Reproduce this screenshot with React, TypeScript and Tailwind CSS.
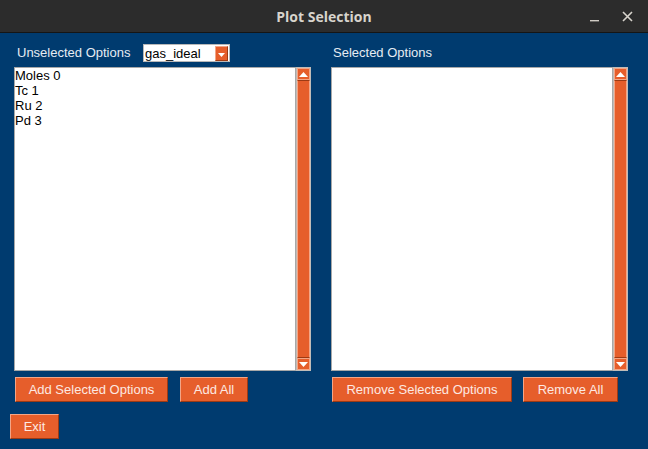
import React from "react";

const font = { fontFamily: '"Liberation Sans", Arial, sans-serif' };

function Btn({ label, w }: { label: string; w: string }) {
  return (
    <div
      className={`${w} h-[25px] flex items-center justify-center bg-[#e65e2b] border border-t-[#f3a586] border-l-[#f3a586] border-b-[#9c3a14] border-r-[#9c3a14] text-[#fde9e2] text-[13px] leading-none`}
    >
      {label}
    </div>
  );
}

function ScrollBar() {
  return (
    <div className="w-[15px] h-full flex flex-col bg-[#e65e2b] border border-[#c0bcb8] box-border">
      <div className="h-[12px] flex items-center justify-center bg-[#e65e2b] border border-[#f3a586]">
        <svg width="9" height="5" viewBox="0 0 9 5">
          <polygon points="4.5,0 9,5 0,5" fill="#ffffff" />
        </svg>
      </div>
      <div className="flex-1 border-x border-[#f3a586] border-y border-y-[#9c3a14]" />
      <div className="h-[12px] flex items-center justify-center bg-[#e65e2b] border border-[#f3a586]">
        <svg width="9" height="5" viewBox="0 0 9 5">
          <polygon points="0,0 9,0 4.5,5" fill="#ffffff" />
        </svg>
      </div>
    </div>
  );
}

function ListBox({ items }: { items: string[] }) {
  return (
    <div className="flex h-[304px] w-[297px]">
      <div className="flex-1 bg-white border border-[#a8a8a8] text-black text-[13px] leading-[15px]">
        {items.map((t) => (
          <div key={t}>{t}</div>
        ))}
      </div>
      <ScrollBar />
    </div>
  );
}

export default function App() {
  return (
    <div className="w-[648px] h-[449px] flex flex-col bg-[#003b6f] overflow-hidden" style={font}>
      <div className="h-[33px] shrink-0 bg-[#2c2c2c] border-b border-[#151515] relative flex items-center justify-center">
        <span
          className="text-[#d8d4cd] text-[14px] font-bold"
          style={{ fontFamily: '"Open Sans", "DejaVu Sans", sans-serif' }}
        >
          Plot Selection
        </span>
        <div className="absolute right-[15px] top-0 h-full flex items-center gap-[22px] text-[#d8d4cd]">
          <svg width="10" height="12" viewBox="0 0 10 12">
            <rect x="0" y="10" width="9" height="1.4" fill="#cfcbc4" />
          </svg>
          <svg width="11" height="11" viewBox="0 0 11 11">
            <path d="M1 1 L10 10 M10 1 L1 10" stroke="#d8d4cd" strokeWidth="1.6" />
          </svg>
        </div>
      </div>
      <div className="flex flex-col pt-[11px] pl-[14px]">
        <div className="flex gap-[20px]">
          <div className="flex flex-col w-[297px]">
            <div className="flex items-center h-[18px]">
              <span className="text-[#e6ecf3] text-[13px] pl-[3px] w-[129px]">Unselected Options</span>
              <div className="w-[87px] h-[18px] bg-white border border-[#b8b8b8] flex items-center justify-between pl-[1px] pr-[1px]">
                <span className="text-black text-[13px] leading-none">gas_ideal</span>
                <div className="w-[13px] h-[15px] bg-[#e65e2b] border border-t-[#f3a586] border-l-[#f3a586] border-b-[#9c3a14] border-r-[#9c3a14] flex items-center justify-center">
                  <svg width="7" height="4" viewBox="0 0 7 4" className="mt-[3px]">
                    <polygon points="0,0 7,0 3.5,4" fill="#ffffff" />
                  </svg>
                </div>
              </div>
            </div>
            <div className="mt-[5px]">
              <ListBox items={["Moles 0", "Tc 1", "Ru 2", "Pd 3"]} />
            </div>
            <div className="flex gap-[12px] mt-[6px] pl-[1px]">
              <Btn label="Add Selected Options" w="w-[153px]" />
              <Btn label="Add All" w="w-[68px]" />
            </div>
          </div>
          <div className="flex flex-col w-[297px]">
            <div className="flex items-center h-[18px]">
              <span className="text-[#e6ecf3] text-[13px] pl-[2px]">Selected Options</span>
            </div>
            <div className="mt-[5px]">
              <ListBox items={[]} />
            </div>
            <div className="flex gap-[11px] mt-[6px] pl-[1px]">
              <Btn label="Remove Selected Options" w="w-[180px]" />
              <Btn label="Remove All" w="w-[95px]" />
            </div>
          </div>
        </div>
        <div className="mt-[12px] -ml-[4px]">
          <Btn label="Exit" w="w-[49px]" />
        </div>
      </div>
    </div>
  );
}
